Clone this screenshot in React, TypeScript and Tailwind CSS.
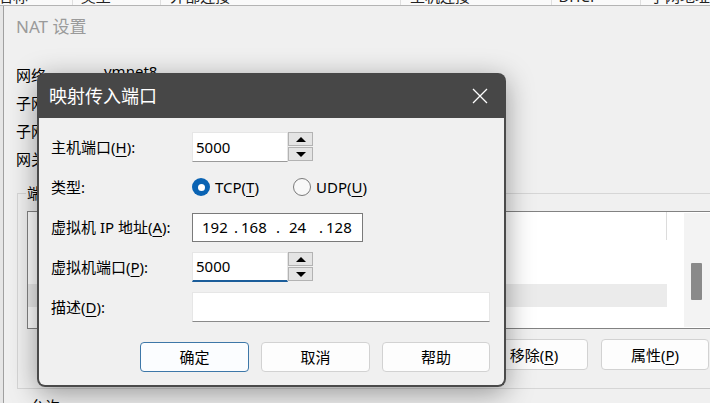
import React from "react";

const F = "font-['Noto_Sans','Noto_Sans_CJK_SC',sans-serif]";

function U({ c }: { c: string }) {
  return <span className="underline underline-offset-[3px] decoration-1">{c}</span>;
}

function SpinBtn({ up }: { up: boolean }) {
  return (
    <div className="h-[14px] flex items-center justify-center border border-[#b3b3b3] bg-[#e4e4e4]">
      <svg width="10" height="5" viewBox="0 0 10 5">
        {up ? <path d="M0 5 L5 0 L10 5Z" fill="#000" /> : <path d="M0 0 L10 0 L5 5Z" fill="#000" />}
      </svg>
    </div>
  );
}

function Spinner() {
  return (
    <div className="w-[25px] h-[30px] flex flex-col gap-[1px]">
      <SpinBtn up />
      <SpinBtn up={false} />
    </div>
  );
}

function Btn({ children, w, primary }: { children: React.ReactNode; w: string; primary?: boolean }) {
  return (
    <div
      className={`${w} h-[30px] rounded-[4px] border flex items-center justify-center text-[15px] leading-[20px] ${
        primary ? "border-[#3d77a8] bg-[#fbfdff]" : "border-[#d2d2d2] bg-[#fdfdfd]"
      }`}
    >
      {children}
    </div>
  );
}

function Label({ children }: { children: React.ReactNode }) {
  return <div className="w-[141px] text-[15px] leading-[20px] whitespace-nowrap">{children}</div>;
}

export default function App() {
  return (
    <div className={`relative w-[710px] h-[403px] overflow-hidden bg-[#f0f0f0] text-black ${F}`}>
      {/* header strip of window behind */}
      <div className="h-[6px] overflow-hidden bg-[#fafafa] border-b border-[#b4b4b4]">
        <div className="flex -mt-[14px] h-[20px] text-[15px] leading-[20px] text-[#222] whitespace-nowrap">
          <div className="w-[74px] -ml-[2px]">名称</div>
          <div className="w-[89px] pl-[8px] border-l border-[#dedede]">类型</div>
          <div className="w-[241px] pl-[9px] border-l border-[#dedede]">外部连接</div>
          <div className="w-[152px] pl-[9px] border-l border-[#dedede]">主机连接</div>
          <div className="w-[89px] pl-[6px] border-l border-[#dedede]">DHCP</div>
          <div className="flex-1 pl-[9px] border-l border-[#dedede]">子网地址</div>
        </div>
      </div>

      <div className="flex h-[397px]">
        <div className="w-[4px] bg-[#e6e6e6] border-r border-[#a0a0a0]" />
        {/* NAT window */}
        <div className="flex-1 flex flex-col bg-[#f0f0f0]">
          <div className="pt-[11px] pl-[12px] text-[17px] leading-[20px] text-[#9a9a9a]">NAT 设置</div>
          <div className="mt-[28px] pl-[12px] flex flex-col gap-[8px] text-[15px] leading-[20px]">
            <div className="flex items-start">
              <div className="w-[88px]">网络:</div>
              <div className="-mt-[4px]">vmnet8</div>
            </div>
            <div className="flex">
              <div className="w-[88px]">子网 IP:</div>
              <div>192.168.24.0</div>
            </div>
            <div className="flex">
              <div className="w-[88px]">子网掩码:</div>
              <div>255.255.255.0</div>
            </div>
            <div className="flex">
              <div className="w-[88px]">网关 IP(G):</div>
              <div>192.168.24.2</div>
            </div>
          </div>

          {/* group box */}
          <div className="relative mt-[24px] ml-[13px] border-t border-l border-b border-[#d6d6d6] pt-[17px] pl-[9px] pr-[1px] pb-[18px]">
            <div className="absolute left-[8px] -top-[11px] px-[1px] bg-[#f0f0f0] text-[15px] leading-[20px]">
              端口转发(F)
            </div>
            <div className="h-[118px] -mr-[1px] bg-white border-y border-l border-[#828282] flex">
              <div className="w-[639px] flex flex-col">
                <div className="h-[28px] border-r border-[#dcdcdc]" />
                <div className="h-[44px]" />
                <div className="h-[23px] bg-[#ebebeb]" />
              </div>
              <div className="w-[17px]" />
              <div className="flex-1 my-[1px] bg-[#f3f3f3] pt-[50px] pl-[7px]">
                <div className="w-[11px] h-[37px] bg-[#8a8a8a] rounded-[1px]" />
              </div>
            </div>
            <div className="mt-[10px] flex justify-end gap-[13px]">
              <Btn w="w-[108px] h-[31px]">
                移除(<U c="R" />)
              </Btn>
              <Btn w="w-[108px] h-[31px]">
                属性(<U c="P" />)
              </Btn>
            </div>
          </div>
          <div className="mt-[7px] pl-[26px] text-[15px] leading-[20px]">允许</div>
        </div>
      </div>

      {/* dialog */}
      <div className="absolute left-[37px] top-[73px] w-[469px] h-[314px] rounded-[8px] shadow-[0_6px_28px_rgba(0,0,0,0.38)] flex flex-col">
        <div className="h-[45px] bg-[#474747] rounded-t-[8px] flex items-center justify-between pl-[12px] pr-[18px]">
          <div className="text-white text-[18px] leading-[24px]">映射传入端口</div>
          <svg width="16" height="16" viewBox="0 0 16 16">
            <path d="M1 1 L15 15 M15 1 L1 15" stroke="#fff" strokeWidth="1.3" fill="none" />
          </svg>
        </div>
        <div className="flex-1 bg-[#f0f0f0] border-x-2 border-b-2 border-[#4a4a4a] rounded-b-[8px] flex flex-col pt-[14px] pl-[12px] pr-[14px]">
          <div className="flex flex-col gap-[10px]">
            <div className="flex items-center h-[30px]">
              <Label>
                主机端口(<U c="H" />):
              </Label>
              <div className="w-[96px] h-[30px] bg-white border border-[#e6e6e6] border-b-[#9a9a9a] pl-[3px] flex items-center text-[15px]">
                5000
              </div>
              <Spinner />
            </div>
            <div className="flex items-center h-[30px]">
              <Label>类型:</Label>
              <div className="w-[101px] flex items-center">
                <div className="w-[18px] h-[18px] rounded-full bg-[#0a63b3] flex items-center justify-center">
                  <div className="w-[7px] h-[7px] rounded-full bg-white" />
                </div>
                <div className="ml-[5px] text-[15px] leading-[20px]">
                  TCP(<U c="T" />)
                </div>
              </div>
              <div className="flex items-center">
                <div className="w-[18px] h-[18px] rounded-full border border-[#7a7a7a] bg-[#f8f8f8]" />
                <div className="ml-[5px] text-[15px] leading-[20px]">
                  UDP(<U c="U" />)
                </div>
              </div>
            </div>
            <div className="flex items-center h-[30px]">
              <Label>
                虚拟机 IP 地址(<U c="A" />):
              </Label>
              <div className="w-[171px] h-[29px] bg-white border border-[#7a7a7a] flex items-center text-[15px] leading-[20px] whitespace-pre">
                <span className="w-[41px] pl-[9px]">192</span>
                <span className="w-[7px]">.</span>
                <span className="w-[35px]">168</span>
                <span className="w-[13px]">.</span>
                <span className="w-[30px]">24</span>
                <span className="w-[7px]">.</span>
                <span>128</span>
              </div>
            </div>
            <div className="flex items-center h-[30px]">
              <Label>
                虚拟机端口(<U c="P" />):
              </Label>
              <div className="w-[96px] h-[30px] bg-white border border-[#e6e6e6] border-b-2 border-b-[#1b5d9a] pl-[3px] flex items-center text-[15px]">
                5000
              </div>
              <Spinner />
            </div>
            <div className="flex items-center h-[30px]">
              <Label>
                描述(<U c="D" />):
              </Label>
              <div className="w-[299px] h-[30px] bg-white border border-[#e6e6e6] border-b-[#8a8a8a]" />
            </div>
          </div>
          <div className="mt-[20px] flex justify-end gap-[12px]">
            <Btn w="w-[109px]" primary>
              确定
            </Btn>
            <Btn w="w-[109px]">取消</Btn>
            <Btn w="w-[108px]">帮助</Btn>
          </div>
        </div>
      </div>
    </div>
  );
}
